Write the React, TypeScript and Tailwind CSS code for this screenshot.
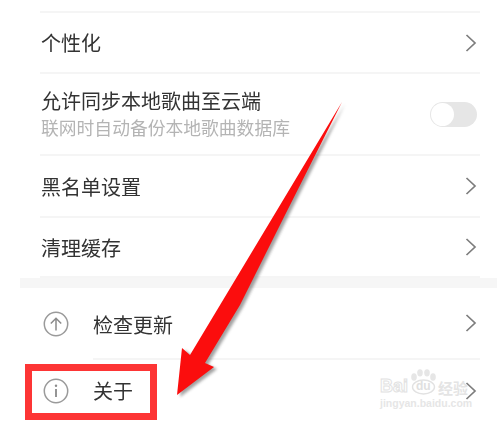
import React from 'react';

const ChevronRight = () => (
  <svg width="12" height="18" viewBox="0 0 12 18" fill="none" className="shrink-0">
    <path d="M1.5 1 L10 9 L1.5 17" stroke="#7d7d7d" strokeWidth="1.7" />
  </svg>
);

const UpdateIcon = () => (
  <svg width="26" height="26" viewBox="0 0 26 26" fill="none" className="shrink-0">
    <circle cx="13" cy="13" r="11.7" stroke="#9a9a9a" strokeWidth="1.5" />
    <path d="M13 19.5 V7.5 M7.8 12.5 L13 7.2 L18.2 12.5" stroke="#8a8a8a" strokeWidth="1.5" />
  </svg>
);

const InfoIcon = () => (
  <svg width="26" height="26" viewBox="0 0 26 26" fill="none" className="shrink-0">
    <circle cx="13" cy="13" r="11.7" stroke="#9a9a9a" strokeWidth="1.5" />
    <circle cx="13" cy="7.8" r="1.2" fill="#8a8a8a" />
    <path d="M13 11 V19" stroke="#8a8a8a" strokeWidth="1.8" />
  </svg>
);

const Row = ({ label, height }: { label: string; height: string }) => (
  <div className={`flex items-center justify-between border-b-2 border-[#f5f5f5] pl-[1px] pr-[3px] ${height}`}>
    <span className="pt-[1px] text-[20px] leading-none text-[#333333]">{label}</span>
    <ChevronRight />
  </div>
);

const IconRow = ({ icon, label, height, line }: { icon: React.ReactNode; label: string; height: string; line?: boolean }) => (
  <div className={`flex items-center ${height}`}>
    <div className="flex w-[53px] justify-start pl-[3px]">{icon}</div>
    <div className={`flex flex-1 items-center justify-between self-stretch pr-[3px] ${line ? 'border-b-2 border-[#f5f5f5]' : ''}`}>
      <span className={`text-[20px] leading-none text-[#333333] ${line ? 'pt-[3px]' : ''}`}>{label}</span>
      <ChevronRight />
    </div>
  </div>
);

export default function App() {
  return (
    <div className="relative h-[423px] w-[497px] overflow-hidden bg-white font-['Noto_Sans_CJK_SC','Liberation_Sans',sans-serif]">
      <div className="blur-[0.5px]">
        <div className="ml-[40px] mr-[17px] h-[13px] border-b-2 border-[#f5f5f5]" />
        <div className="ml-[40px] mr-[17px]">
          <Row label="个性化" height="h-[61px]" />
          <div className="flex h-[82px] items-center justify-between border-b-2 border-[#f5f5f5] pl-[1px] pr-[3px]">
            <div className="flex flex-col gap-[8px]">
              <span className="text-[20px] leading-none text-[#333333]">允许同步本地歌曲至云端</span>
              <span className="text-[17.8px] leading-none text-[#b4b4b4]">联网时自动备份本地歌曲数据库</span>
            </div>
            <div className="flex h-[25px] w-[47px] items-center rounded-full bg-[#e6e6e6] pl-[1px]">
              <div className="h-[23px] w-[23px] rounded-full bg-white" />
            </div>
          </div>
          <Row label="黑名单设置" height="h-[62px]" />
          <Row label="清理缓存" height="h-[60px]" />
        </div>
        <div className="ml-[20px] h-[10px] bg-[#f6f6f6]" />
        <div className="ml-[40px] mr-[17px]">
          <IconRow icon={<UpdateIcon />} label="检查更新" height="h-[72px]" line />
          <IconRow icon={<InfoIcon />} label="关于" height="h-[62px]" />
        </div>
      </div>

      {/* annotation: red box */}
      <div className="absolute left-[25px] top-[364px] h-[56px] w-[132px] border-[7px] border-[#fd3535]" />

      {/* annotation: arrow */}
      <svg className="absolute left-0 top-0" width="497" height="423" viewBox="0 0 497 423" fill="none">
        <defs>
          <filter id="arrowShadow" x="-20%" y="-20%" width="140%" height="140%">
            <feGaussianBlur stdDeviation="1.6" />
          </filter>
        </defs>
        <path
          d="M342 102 L285 215 L240 305 L205 363 L214 367 L177 395 L182 348 L190 355 Z"
          fill="#555555"
          opacity="0.55"
          transform="translate(3 2)"
          filter="url(#arrowShadow)"
        />
        <path d="M342 102 L285 215 L240 305 L205 363 L214 367 L177 395 L182 348 L190 355 Z" fill="#fb0d0d" />
      </svg>

      {/* watermark */}
      <div className="absolute left-[380px] top-[369px] flex w-[100px] flex-col items-start">
        <div className="flex h-[26px] items-end">
          <span className="w-[30px] font-['Liberation_Sans',sans-serif] text-[18px] font-bold leading-none text-white [-webkit-text-stroke:1px_#e2e2e2]">Bai</span>
          <div className="relative h-[26px] w-[27px]">
            <svg width="27" height="26" viewBox="0 0 27 26" fill="#e6e6e6" className="absolute left-0 top-0">
              <ellipse cx="13.5" cy="18" rx="11" ry="7" fill="none" stroke="#e2e2e2" strokeWidth="1.4" />
              <ellipse cx="4" cy="8" rx="2.8" ry="3.8" />
              <ellipse cx="10" cy="3.8" rx="2.8" ry="3.6" />
              <ellipse cx="17" cy="3.8" rx="2.8" ry="3.6" />
              <ellipse cx="23" cy="8" rx="2.8" ry="3.8" />
            </svg>
            <span className="absolute bottom-[3px] left-[6px] font-['Liberation_Sans',sans-serif] text-[12px] font-bold leading-none text-[#e0e0e0]">du</span>
          </div>
          <span className="ml-[1px] text-[15px] font-bold leading-none text-[#e4e4e4]">经验</span>
        </div>
        <span className="mt-[3px] whitespace-nowrap font-['Liberation_Sans',sans-serif] text-[10.5px] font-bold leading-none text-[#e6e6e6]">jingyan.baidu.com</span>
      </div>
    </div>
  );
}
